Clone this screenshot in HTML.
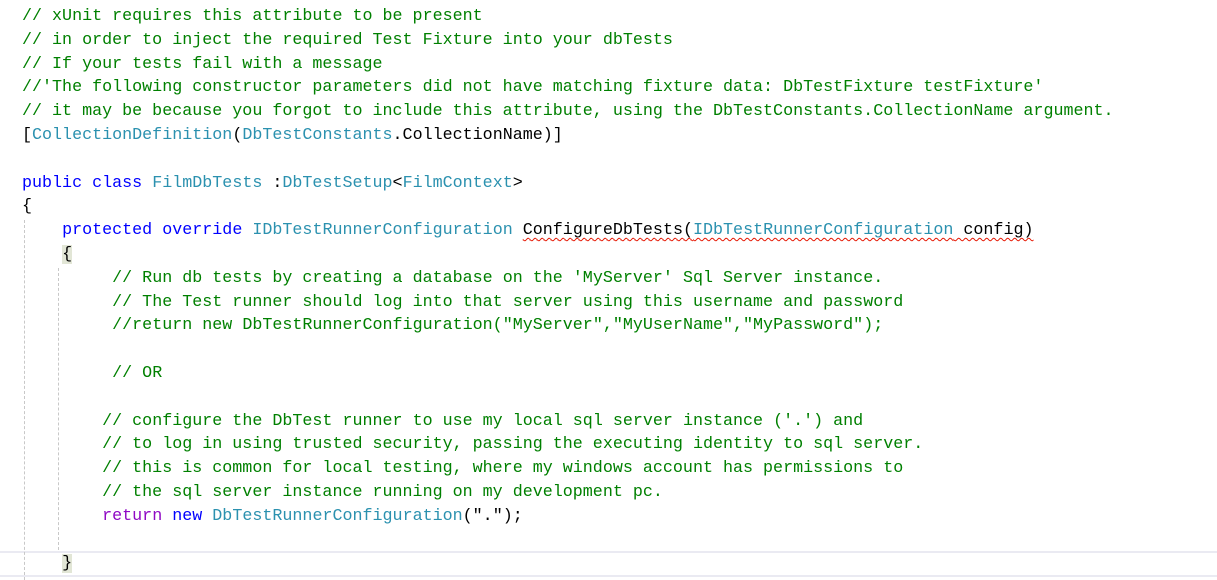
<html><head><style>
body{margin:0;background:#fff;width:1217px;height:578px;overflow:hidden;position:relative}
pre{margin:0;position:absolute;left:22px;top:5px;font-family:"Liberation Mono",monospace;font-size:16.7px;line-height:23.8px;color:#000;letter-spacing:0}
.c{color:#008000}.k{color:#0000ff}.t{color:#2b91af}.r{color:#8f08c4}
.sq{text-decoration:underline wavy #e51400;text-decoration-thickness:1px;text-underline-offset:3px}
.b{background:#e2e6d6}
.g{position:absolute;border-left:1px dashed #c8c8c8;width:0}
.cur{position:absolute;left:0;width:1217px;top:551px;height:22px;border-top:2px solid #eaeaf2;border-bottom:2px solid #eaeaf2}
</style></head><body>
<div class="cur"></div>
<div class="g" style="left:24px;top:220px;height:360px"></div>
<div class="g" style="left:58px;top:268px;height:282px"></div>
<pre><span class="c">// xUnit requires this attribute to be present
// in order to inject the required Test Fixture into your dbTests
// If your tests fail with a message
//'The following constructor parameters did not have matching fixture data: DbTestFixture testFixture'
// it may be because you forgot to include this attribute, using the DbTestConstants.CollectionName argument.</span>
[<span class="t">CollectionDefinition</span>(<span class="t">DbTestConstants</span>.CollectionName)]

<span class="k">public</span> <span class="k">class</span> <span class="t">FilmDbTests</span> :<span class="t">DbTestSetup</span>&lt;<span class="t">FilmContext</span>&gt;
{
    <span class="k">protected</span> <span class="k">override</span> <span class="t">IDbTestRunnerConfiguration</span> <span class="sq">ConfigureDbTests(<span class="t">IDbTestRunnerConfiguration</span> config)</span>
    <span class="b">{</span>
         <span class="c">// Run db tests by creating a database on the 'MyServer' Sql Server instance.</span>
         <span class="c">// The Test runner should log into that server using this username and password</span>
         <span class="c">//return new DbTestRunnerConfiguration("MyServer","MyUserName","MyPassword");</span>

         <span class="c">// OR</span>

        <span class="c">// configure the DbTest runner to use my local sql server instance ('.') and
        // to log in using trusted security, passing the executing identity to sql server.
        // this is common for local testing, where my windows account has permissions to
        // the sql server instance running on my development pc.</span>
        <span class="r">return</span> <span class="k">new</span> <span class="t">DbTestRunnerConfiguration</span>(".");

    <span class="b">}</span>
</pre>
</body></html>
